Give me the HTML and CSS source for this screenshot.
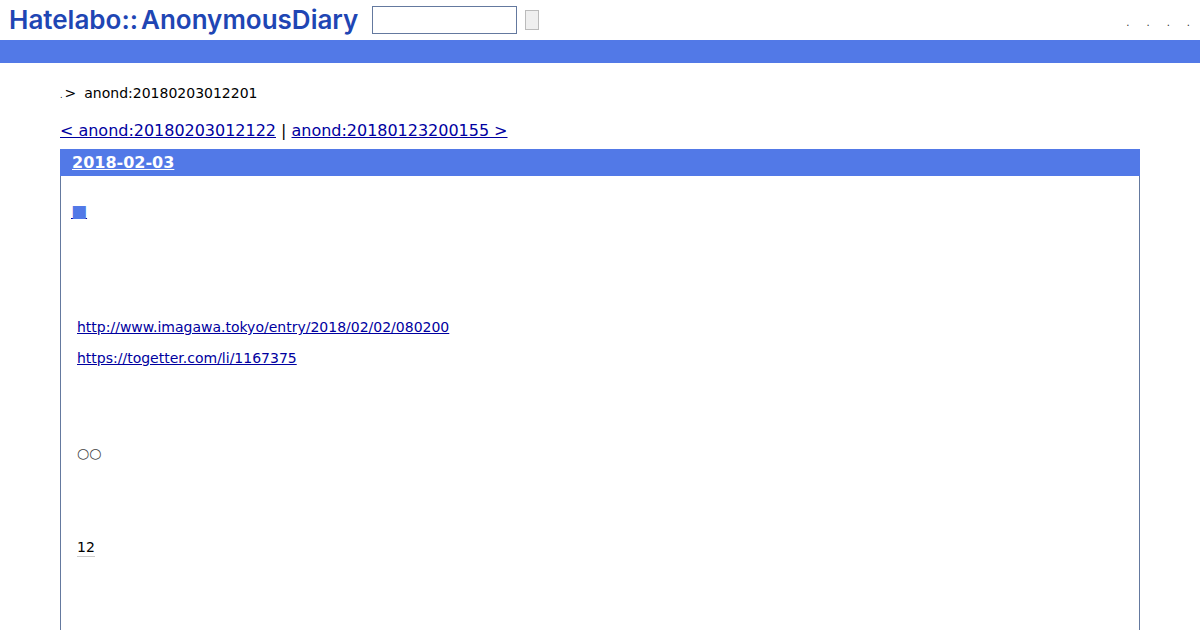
FILE: index.html
```html
<!DOCTYPE html>
<html lang="ja">
<head>
  <meta charset="UTF-8" />
  <title>anond:20180203012201</title>
  <link rel="stylesheet" href="styles.css">
</head>
<body>

  <div id="logo">
    <a class="logo-text" href="#">Hatelabo::<span class="logo-name">AnonymousDiary</span></a>
    <form class="search">
      <input class="search-text" type="text">
      <button class="search-btn" type="button"></button>
    </form>
    <ul class="menu">
      <li>.</li>
      <li>.</li>
      <li>.</li>
      <li>.</li>
    </ul>
  </div>

  <div class="bar"></div>

  <div id="intro">
    <div class="breadcrumb"><span class="dot">.</span><span class="gt">&gt;</span><span class="crumb">anond:20180203012201</span></div>
    <div class="pager"><a href="#">&lt; anond:20180203012122</a> | <a href="#">anond:20180123200155 &gt;</a></div>
  </div>

  <div class="body">
    <div class="day">
      <h2><a href="#">2018-02-03</a></h2>
      <div class="section">
        <h3><a href="#"><span class="sanchor">■</span></a></h3>
        <p class="link-first"><a href="#">http://www.imagawa.tokyo/entry/2018/02/02/080200</a></p>
        <p class="link-second"><a href="#">https://togetter.com/li/1167375</a></p>
        <p class="circles">○○</p>
        <p class="number"><span class="faint">12</span></p>
      </div>
    </div>
  </div>

</body>
</html>
```

FILE: styles.css
```css
:root {
  --hatena-blue: #5279e7;
  --border-blue: #64799f;
  --link-blue: #0000a0;
}

* {
  box-sizing: border-box;
  margin: 0;
  padding: 0;
}

html {
  overflow: hidden;
}

body {
  font-family: 'DejaVu Sans', sans-serif;
  font-size: 14px;
  color: #000;
  background: #fff;
}

a {
  color: var(--link-blue);
}

#logo {
  display: flex;
  align-items: center;
  height: 40px;
  padding-left: 9px;
}

.logo-text {
  font-family: 'Inter', sans-serif;
  font-size: 26px;
  font-weight: 600;
  color: #1f46b4;
  text-decoration: none;
  width: 363px;
  margin-top: -2px;
  white-space: nowrap;
}

.logo-name {
  margin-left: 3px;
}

.search {
  display: flex;
  align-items: center;
  gap: 8px;
}

.search-text {
  width: 145px;
  height: 28px;
  border: 1px solid var(--border-blue);
  background: #fff;
}

.search-btn {
  width: 14px;
  height: 20px;
  border: 1px solid #bbb;
  background: #efefef;
}

.menu {
  list-style: none;
  display: flex;
  gap: 17px;
  margin-left: auto;
  padding: 4px 10px 0 0;
  font-size: 10px;
  color: #333;
}

.bar {
  height: 23px;
  background: var(--hatena-blue);
}

#intro {
  padding: 21px 60px 0;
}

.breadcrumb {
  display: flex;
  align-items: baseline;
  height: 18px;
  line-height: 18px;
}

.dot {
  font-size: 8px;
}

.gt {
  margin-left: 2px;
}

.crumb {
  margin-left: 8px;
}

.pager {
  font-size: 16px;
  line-height: 19px;
  margin-top: 19px;
  letter-spacing: -0.02px;
}

.body {
  margin-top: 9px;
  padding: 0 60px;
}

.day {
  border: 1px solid var(--border-blue);
  border-top: none;
  height: 600px;
}

.day h2 {
  height: 27px;
  margin: 0 -1px;
  padding-left: 12px;
  background: var(--hatena-blue);
  font-size: 16px;
  line-height: 27px;
}

.day h2 a {
  color: #fff;
}

.section {
  padding: 0 16px;
}

.section h3 {
  margin-left: -6px;
  margin-top: 26px;
  font-size: 17px;
  line-height: 19px;
  font-weight: 400;
}

.sanchor {
  color: var(--hatena-blue);
}

.section p {
  line-height: 17px;
}

.link-first {
  margin-top: 98px;
}

.link-second {
  margin-top: 14px;
}

.circles {
  margin-top: 78px;
  color: #444;
}

.number {
  margin-top: 77px;
}

.faint {
  border-bottom: 1px solid #ccc;
  display: inline-block;
}
```
